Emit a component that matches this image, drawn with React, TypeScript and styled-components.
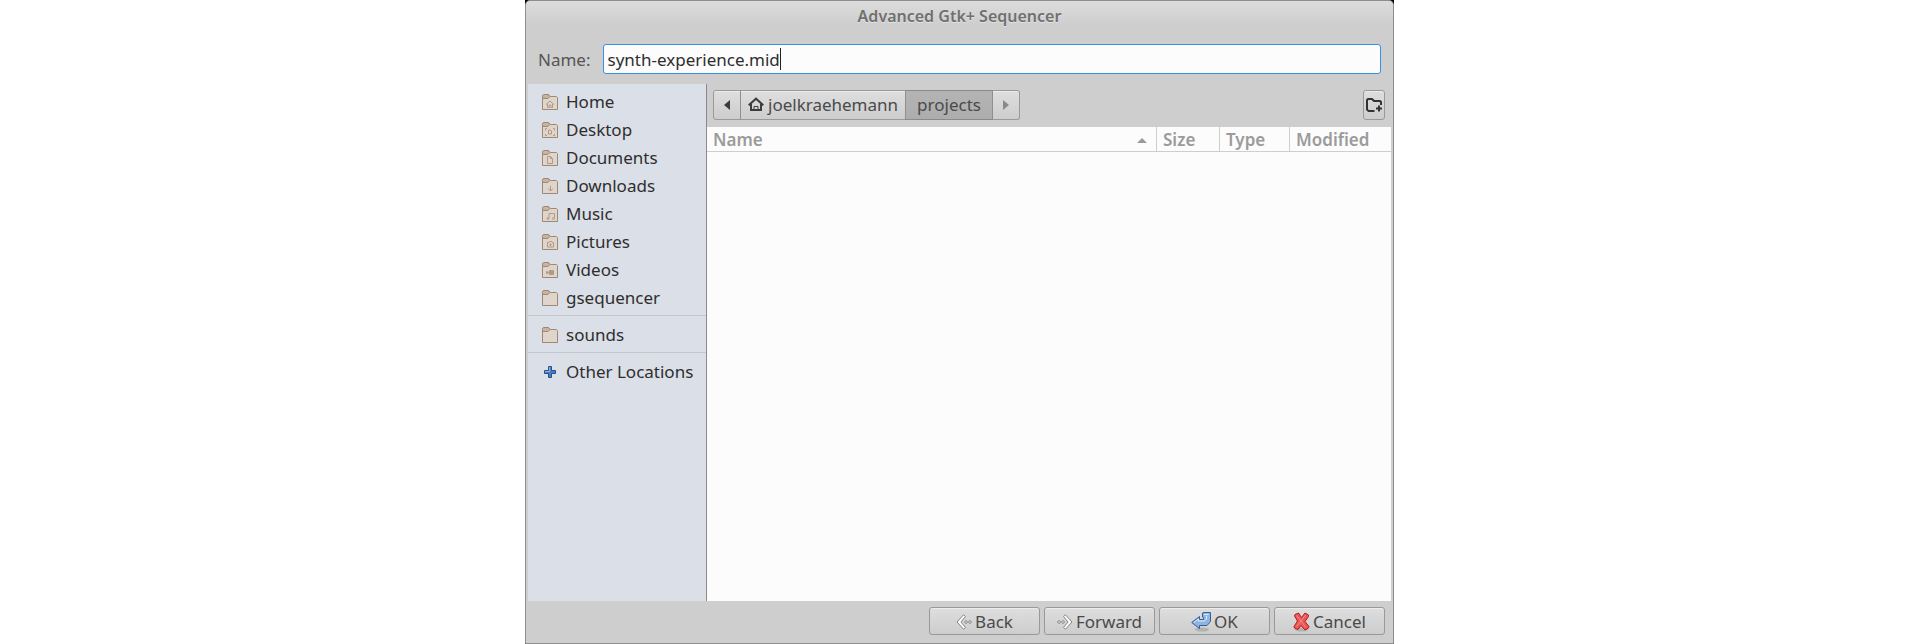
import React from "react";
import styled, { createGlobalStyle, css } from "styled-components";

const Global = createGlobalStyle`
  *, *::before, *::after { box-sizing: border-box; }
  body { margin: 0; background: #fff; }
  body, button, input { font-family: "Noto Sans", "Open Sans", sans-serif; font-size: 17px; line-height: 24px; color: #4a4a4a; }
  button { margin: 0; padding: 0; cursor: default; }
  svg { display: block; flex: none; }
`;

const Desktop = styled.main`
  max-width: 870px;
  margin: 0 auto;
  padding-right: 1px;
`;

const Backdrop = styled.div`
  background: #000;
`;

const Dialog = styled.form`
  display: flex;
  flex-direction: column;
  min-height: 100vh;
  padding: 0 2px;
  border: 1px solid #8d8d8d;
  border-radius: 5px 5px 0 0;
  background: linear-gradient(#dcdcdc, #cecece 24px) #cecece;
`;

const Title = styled.h1`
  margin: 0;
  padding: 3px 0 6px;
  text-align: center;
  font-size: 16px;
  line-height: 24px;
  font-weight: 600;
  color: #707070;
  text-shadow: 0 1px #e2e2e2;
`;

const NameRow = styled.div`
  display: flex;
  align-items: center;
  gap: 12px;
  padding: 10px 10px;
`;

const NameLabel = styled.label`
  padding-top: 2px;
  color: #555;
`;

const NameField = styled.div`
  display: flex;
  align-items: center;
  flex: 1;
  min-width: 0;
  height: 30px;
  padding: 0 4px;
  border: 1px solid #3a8ee6;
  border-radius: 3px;
  background: #fcfcfc;
`;

const NameInput = styled.input`
  field-sizing: content;
  min-width: 0;
  max-width: 100%;
  padding: 2px 0 0;
  border: 0;
  background: transparent;
  color: #2e2e2e;
  caret-color: transparent;
  outline: none;
`;

const Caret = styled.span`
  width: 1px;
  height: 22px;
  background: #222;
`;

const Panes = styled.div`
  display: flex;
  flex: 1;
`;

const Sidebar = styled.nav`
  width: 179px;
  flex: none;
  padding-top: 4px;
  border-right: 1px solid #8a8a8a;
  background: #dbdfe7;
`;

const PlaceGroup = styled.ul`
  list-style: none;
  margin: 0;
  padding: 0;
  & + & {
    margin-top: 3px;
    padding-top: 5px;
    border-top: 1px solid #c3c7ce;
  }
`;

const Place = styled.a`
  display: flex;
  align-items: center;
  gap: 8px;
  height: 28px;
  padding-left: 14px;
  color: #2e2e2e;
  text-decoration: none;
  white-space: nowrap;
`;

const Browser = styled.section`
  display: flex;
  flex-direction: column;
  flex: 1;
  min-width: 0;
`;

const PathRow = styled.div`
  display: flex;
  justify-content: space-between;
  padding: 6px 6px 7px 6px;
`;

const raised = css`
  border: 1px solid #999;
  background: linear-gradient(#dedede, #cdcdcd);
  box-shadow: inset 0 1px #ececec;
  color: #4a4a4a;
`;

const PathBar = styled.div`
  display: flex;
`;

const PathButton = styled.button<{ $pad: number; $active?: boolean }>`
  ${raised}
  display: flex;
  align-items: center;
  justify-content: center;
  gap: 4px;
  height: 30px;
  padding: 0 ${(p) => p.$pad}px;
  & + & { border-left-color: #8f8f8f; margin-left: -1px; }
  &:first-child { border-radius: 3px 0 0 3px; }
  &:last-child { border-radius: 0 3px 3px 0; }
  ${(p) => p.$active && css`
    background: linear-gradient(#b4b4b4, #adadad);
    border-color: #8a8a8a;
    box-shadow: none;
  `}
`;

const NewFolderButton = styled.button`
  ${raised}
  display: flex;
  align-items: center;
  justify-content: center;
  width: 22px;
  height: 30px;
  border-radius: 3px;
`;

const FilePane = styled.div`
  flex: 1;
  background: #fcfcfc;
`;

const FileTable = styled.table`
  width: 100%;
  table-layout: fixed;
  border-collapse: separate;
  border-spacing: 0;
`;

const Column = styled.th<{ $width?: number }>`
  width: ${(p) => (p.$width ? `${p.$width}px` : "auto")};
  height: 25px;
  padding: 2px 6px 0;
  border-bottom: 1px solid #cecece;
  text-align: left;
  line-height: 22px;
  font-weight: 600;
  color: #9b9b9b;
  & + & { border-left: 1px solid #cecece; }
`;

const Sortable = styled.span`
  display: flex;
  align-items: center;
  justify-content: space-between;
  padding-right: 3px;
`;

const Actions = styled.footer`
  display: flex;
  justify-content: flex-end;
  gap: 4px;
  padding: 6px 6px 8px;
`;

const ActionButton = styled.button`
  ${raised}
  display: flex;
  align-items: center;
  justify-content: center;
  gap: 3px;
  width: 111px;
  height: 28px;
  padding-top: 2px;
  border-radius: 3px;
`;

const emblems: Record<string, React.ReactNode> = {
  home: <path d="M4 10.500 8 7l4 3.500M5.500 10v3.500h1.700v-2.500h1.600v2.500h1.700V10" />,
  desktop: <path d="M3.500 8.500v-2H5M3.500 12v1.500H5M11 6.500h1.500v2M12.500 12v1.500H11M6.500 8h2l1 1v3h-3z" />,
  documents: <path d="M5.500 6.500h3l2 2v5h-5zM8.500 6.500v2h2" />,
  downloads: <path d="M8.500 8v5M6 10.500l2.500 2.500 2.500-2.500" />,
  music: <path d="M7 12V7.500h5.500V12M7 12.500a1 1 0 1 1-2 0 1 1 0 0 1 2 0zM12.500 12.500a1 1 0 1 1-2 0 1 1 0 0 1 2 0z" />,
  pictures: <path d="M5.500 8.500h1.500l.5-1h2l.5 1h1.500v4.500h-6zM8.500 9.500v2.500M7.300 10.700h2.400" />,
  videos: <path fill="#b09a88" d="M7.500 8.500h4v4h-4zM4.500 9.500 7.500 10.500l-3 1z" />,
};

const Folder = ({ emblem }: { emblem?: string }) => (
  <svg width="16" height="16" viewBox="0 0 16 16" fill="none" aria-hidden="true">
    <path d="M.5 15.500V1.500l1-1h5l2 2h6l1 1v12z" fill="#dfd5cb" stroke="#9f8975" />
    <path d="M.5 4.500v-3l1-1h5l1.500 2-2 2z" fill="#c5b3a3" stroke="#9f8975" />
    {emblem && <g stroke="#b09a88">{emblems[emblem]}</g>}
  </svg>
);

const Plus = () => (
  <svg width="16" height="16" viewBox="0 0 16 16" aria-hidden="true">
    <path d="M6.500 2.500h3v4h4v3h-4v4h-3v-4h-4v-3h4z" fill="#4a7abf" stroke="#27508f" strokeLinejoin="round" />
    <path d="M7.500 3v4.500H3" stroke="#8fb2e0" fill="none" />
  </svg>
);

const Triangle = ({ points, color, w, h }: { points: string; color: string; w: number; h: number }) => (
  <svg width={w} height={h} viewBox={`0 0 ${w} ${h}`} aria-hidden="true">
    <polygon points={points} fill={color} />
  </svg>
);

const HomeIcon = () => (
  <svg width="16" height="16" viewBox="0 0 16 16" fill="none" stroke="#3c3c3c" strokeWidth="2" aria-hidden="true">
    <path d="M.7 8.200 8 1.700l7.300 6.500" />
    <path d="M3 7v6h10V7" />
    <path d="M6 14v-4.500h4V14" strokeWidth="1" />
  </svg>
);

const NewFolderIcon = () => (
  <svg width="16" height="16" viewBox="0 0 16 16" fill="none" stroke="#333" strokeWidth="2" aria-hidden="true">
    <path d="M8.500 14H2.500L1 12.500V3l1-1h4l2 2h6l1 1v3" />
    <path d="M13 8.500v6M10 11.500h6" />
  </svg>
);

const BackIcon = () => (
  <svg width="16" height="16" viewBox="0 0 16 16" aria-hidden="true">
    <path d="M7.500.8 1 8l6.500 7.200 2-1.700L5 8l4.500-5.500z" fill="#fafafa" stroke="#858585" strokeLinejoin="round" />
    <circle cx="10" cy="8" r="1.300" fill="#fafafa" stroke="#858585" />
    <circle cx="14" cy="8" r="1.300" fill="#fafafa" stroke="#858585" />
  </svg>
);

const ForwardIcon = () => (
  <svg width="16" height="16" viewBox="0 0 16 16" aria-hidden="true">
    <path d="M8.500.8 15 8l-6.500 7.200-2-1.700L11 8 6.500 2.500z" fill="#fafafa" stroke="#858585" strokeLinejoin="round" />
    <circle cx="2" cy="8" r="1.300" fill="#fafafa" stroke="#858585" />
    <circle cx="6" cy="8" r="1.300" fill="#fafafa" stroke="#858585" />
  </svg>
);

const OkIcon = () => (
  <svg width="20" height="20" viewBox="0 0 20 20" aria-hidden="true">
    <ellipse cx="11" cy="17.500" rx="7" ry="2" fill="#000" opacity=".14" />
    <path d="M.7 10.500 8.500 4.500v3h4V6l-1-1V1l1.500-.5h6.500v9l-3.500 4H8.500v3z" fill="#8fb5df" stroke="#345f9c" strokeLinejoin="round" />
    <path d="M3 10.500 7.500 7v2h6l2-2V4M13 2.500h4.500" fill="none" stroke="#dceafa" />
  </svg>
);

const CancelIcon = () => (
  <svg width="17" height="20" viewBox="0 0 17 20" aria-hidden="true">
    <ellipse cx="8.500" cy="17.500" rx="7" ry="2" fill="#000" opacity=".14" />
    <path d="M2 2.500 5.500 1 8.500 5.500 12 1l3.500 2v1.500l-3.500 5 4 5-.5 1.500-3.500 2-4-4.500-3 4L1.500 16l-.5-1.500 3.500-5.500-3-5z" fill="#ee5555" stroke="#b01c22" strokeLinejoin="round" />
    <path d="M3.500 3.500l4.500 5.500 4.500-6M3.500 14.500l4.500-5.500 4.500 6" fill="none" stroke="#f88c8c" />
  </svg>
);

const places: [string, string | undefined][] = [
  ["Home", "home"],
  ["Desktop", "desktop"],
  ["Documents", "documents"],
  ["Downloads", "downloads"],
  ["Music", "music"],
  ["Pictures", "pictures"],
  ["Videos", "videos"],
  ["gsequencer", undefined],
];

export default function App() {
  return (
    <Desktop>
      <Global />
      <Backdrop>
        <Dialog onSubmit={(e) => e.preventDefault()}>
          <Title>Advanced Gtk+ Sequencer</Title>
          <NameRow>
            <NameLabel htmlFor="file-name">Name:</NameLabel>
            <NameField>
              <NameInput id="file-name" type="text" defaultValue="synth-experience.mid" spellCheck={false} />
              <Caret />
            </NameField>
          </NameRow>
          <Panes>
            <Sidebar aria-label="Places">
              <PlaceGroup>
                {places.map(([name, emblem]) => (
                  <li key={name}>
                    <Place href="#"><Folder emblem={emblem} />{name}</Place>
                  </li>
                ))}
              </PlaceGroup>
              <PlaceGroup>
                <li><Place href="#"><Folder />sounds</Place></li>
              </PlaceGroup>
              <PlaceGroup>
                <li><Place href="#"><Plus />Other Locations</Place></li>
              </PlaceGroup>
            </Sidebar>
            <Browser>
              <PathRow>
                <PathBar>
                  <PathButton type="button" $pad={10} aria-label="Scroll path left">
                    <Triangle w={6} h={10} points="6,0 6,10 0,5" color="#3c3c3c" />
                  </PathButton>
                  <PathButton type="button" $pad={7}><HomeIcon />joelkraehemann</PathButton>
                  <PathButton type="button" $pad={11} $active>projects</PathButton>
                  <PathButton type="button" $pad={10} aria-label="Scroll path right">
                    <Triangle w={6} h={10} points="0,0 0,10 6,5" color="#8a8a8a" />
                  </PathButton>
                </PathBar>
                <NewFolderButton type="button" aria-label="Create folder"><NewFolderIcon /></NewFolderButton>
              </PathRow>
              <FilePane>
                <FileTable>
                  <thead>
                    <tr>
                      <Column scope="col">
                        <Sortable>Name<Triangle w={10} h={5} points="0,5 10,5 5,0" color="#9b9b9b" /></Sortable>
                      </Column>
                      <Column scope="col" $width={63}>Size</Column>
                      <Column scope="col" $width={70}>Type</Column>
                      <Column scope="col" $width={102}>Modified</Column>
                    </tr>
                  </thead>
                </FileTable>
              </FilePane>
            </Browser>
          </Panes>
          <Actions>
            <ActionButton type="button"><BackIcon />Back</ActionButton>
            <ActionButton type="button"><ForwardIcon />Forward</ActionButton>
            <ActionButton type="submit"><OkIcon />OK</ActionButton>
            <ActionButton type="button"><CancelIcon />Cancel</ActionButton>
          </Actions>
        </Dialog>
      </Backdrop>
    </Desktop>
  );
}
